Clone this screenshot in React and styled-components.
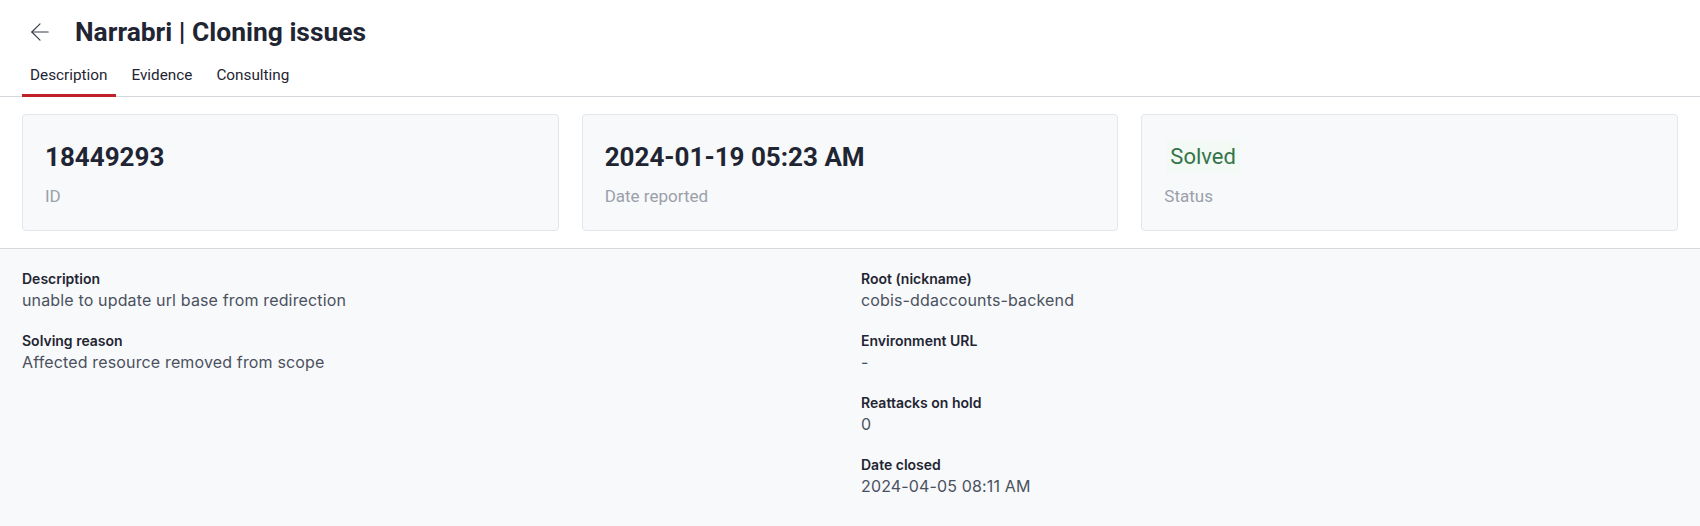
import React from "react";
import styled, { createGlobalStyle } from "styled-components";
import { ArrowLeft } from "lucide-react";

const GlobalStyle = createGlobalStyle`
  html, body {
    margin: 0;
    padding: 0;
    background: #ffffff;
    font-family: Roboto, "Liberation Sans", sans-serif;
  }
  * {
    box-sizing: border-box;
  }
`;

const cards = [
  { value: "18449293", label: "ID" },
  { value: "2024-01-19 05:23 AM", label: "Date reported" },
  { value: "Solved", label: "Status", status: true },
];

const leftFields = [
  { label: "Description", value: "unable to update url base from redirection" },
  { label: "Solving reason", value: "Affected resource removed from scope" },
];

const rightFields = [
  { label: "Root (nickname)", value: "cobis-ddaccounts-backend" },
  { label: "Environment URL", value: "-" },
  { label: "Reattacks on hold", value: "0" },
  { label: "Date closed", value: "2024-04-05 08:11 AM" },
];

const App = () => {
  return (
    <Page>
      <GlobalStyle />
      <Header>
        <TitleRow>
          <BackButton aria-label="Back">
            <ArrowLeft size={28} strokeWidth={1} />
          </BackButton>
          <Title>Narrabri | Cloning issues</Title>
        </TitleRow>
        <Tabs>
          <Tab $active>Description</Tab>
          <Tab>Evidence</Tab>
          <Tab>Consulting</Tab>
        </Tabs>
      </Header>

      <Cards>
        {cards.map((card) => (
          <Card key={card.label}>
            {card.status ? (
              <StatusValue>{card.value}</StatusValue>
            ) : (
              <CardValue>{card.value}</CardValue>
            )}
            <CardLabel>{card.label}</CardLabel>
          </Card>
        ))}
      </Cards>

      <Details>
        <Column>
          {leftFields.map((f) => (
            <Field key={f.label}>
              <FieldLabel>{f.label}</FieldLabel>
              <FieldValue>{f.value}</FieldValue>
            </Field>
          ))}
        </Column>
        <Column>
          {rightFields.map((f) => (
            <Field key={f.label}>
              <FieldLabel>{f.label}</FieldLabel>
              <FieldValue>{f.value}</FieldValue>
            </Field>
          ))}
        </Column>
      </Details>
    </Page>
  );
};

const Page = styled.div`
  width: 100%;
  min-height: 526px;
  background: #f8f9fa;
`;

const Header = styled.div`
  background: #ffffff;
  padding: 0 22px;
  border-bottom: 1px solid #d6d8de;
`;

const TitleRow = styled.div`
  display: flex;
  align-items: center;
  height: 63px;
  gap: 17px;
`;

const BackButton = styled.button`
  display: flex;
  align-items: center;
  justify-content: center;
  width: 36px;
  height: 36px;
  padding: 0;
  border: none;
  background: transparent;
  color: #3a3f48;
  cursor: pointer;
`;

const Title = styled.h1`
  margin: 0;
  font-size: 26.4px;
  font-weight: 700;
  color: #1f2533;
  letter-spacing: 0;
`;

const Tabs = styled.div`
  display: flex;
  gap: 7px;
`;

const Tab = styled.div`
  height: 34px;
  padding: 3px 9px 0 8px;
  font-size: 15.3px;
  line-height: 18px;
  color: #1f2533;
  border-bottom: 3px solid ${(p) => (p.$active ? "#bf2127" : "transparent")};
  margin-bottom: -1px;
  cursor: pointer;
`;

const Cards = styled.div`
  display: grid;
  grid-template-columns: repeat(3, 1fr);
  gap: 23px;
  padding: 17px 22px;
  background: #ffffff;
  border-bottom: 1px solid #d6d8de;
`;

const Card = styled.div`
  height: 117px;
  background: #f8f9fa;
  border: 1px solid #e4e6eb;
  border-radius: 4px;
  padding: 26px 22px 0;
  display: flex;
  flex-direction: column;
`;

const CardValue = styled.div`
  font-size: 26px;
  font-weight: 700;
  color: #1f2533;
  line-height: 32px;
`;

const StatusValue = styled.div`
  align-self: flex-start;
  font-size: 22px;
  font-weight: 400;
  color: #34744a;
  line-height: 32px;
  padding: 0 4px;
  margin-left: 2px;
  background: #f3f9f4;
`;

const CardLabel = styled.div`
  margin-top: 13px;
  font-size: 17px;
  color: #9aa0aa;
`;

const Details = styled.div`
  display: grid;
  grid-template-columns: 1fr 1fr;
  gap: 22px;
  padding: 20px 22px;
  font-family: Inter, "Noto Sans", sans-serif;
`;

const Column = styled.div`
  display: flex;
  flex-direction: column;
  gap: 19px;
`;

const Field = styled.div`
  display: flex;
  flex-direction: column;
`;

const FieldLabel = styled.div`
  font-size: 14px;
  font-weight: 600;
  color: #1f2533;
  line-height: 19px;
`;

const FieldValue = styled.div`
  font-size: 16px;
  letter-spacing: 0.15px;
  color: #4a5160;
  line-height: 24px;
`;

export default App;
